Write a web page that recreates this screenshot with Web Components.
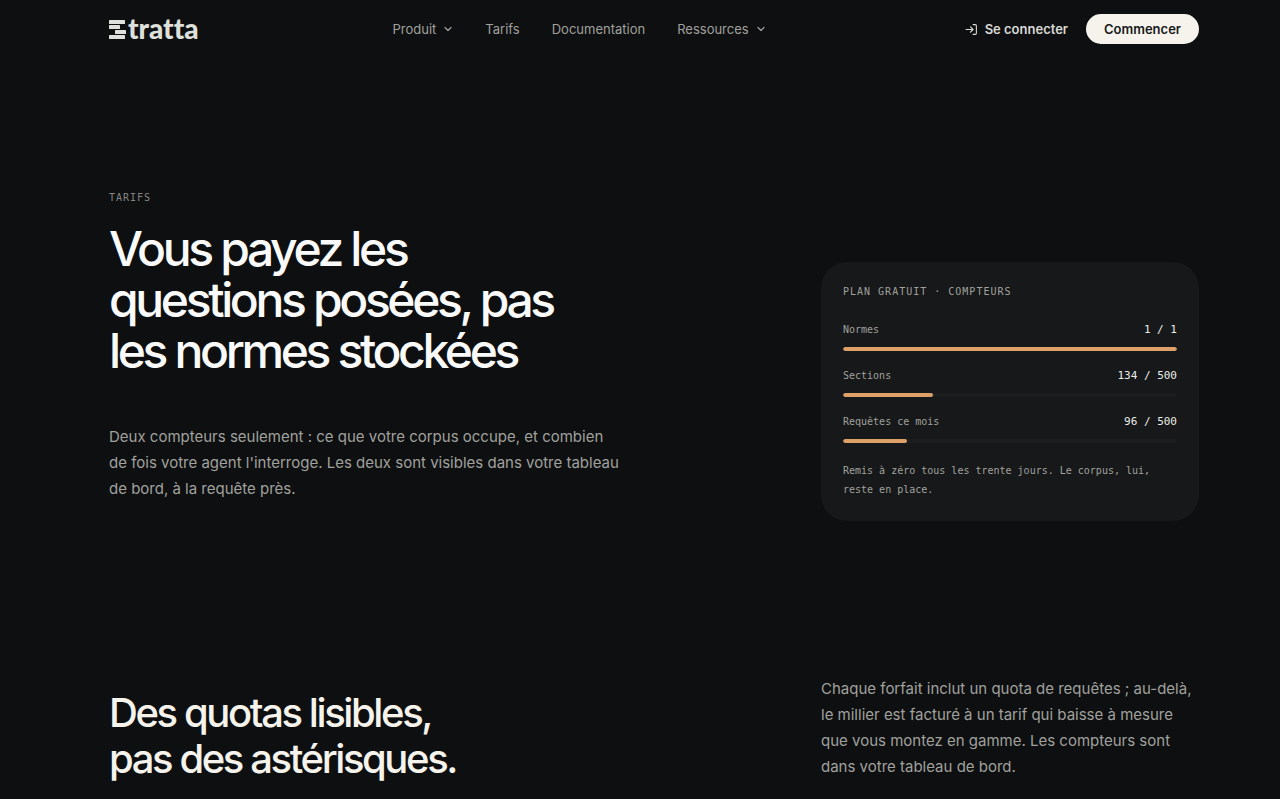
<!DOCTYPE html>
<html lang="fr">
<head>
<meta charset="utf-8">
<meta name="viewport" content="width=device-width, initial-scale=1">
<title>Etratta – Tarifs</title>
<style>
  body {
    --text: #fafafa;
    --cream: #f6f3ec;
    --muted: #a1a19e;
    --accent: #dea069;
    --mono: "DejaVu Sans Mono", monospace;
    --page-start: 109px;
    --page-end: 81px;
    --aside: 378px;
    margin: 0;
    background: #0d0f10;
    color: var(--text);
    font-family: Inter, sans-serif;
    font-size: 15px;
    line-height: 26px;
  }
</style>
</head>
<body>
<site-header></site-header>
<main>
  <pricing-hero>
    <span slot="eyebrow">Tarifs</span>
    <span slot="title">Vous payez les questions posées, pas les normes stockées</span>
    <span slot="lead">Deux compteurs seulement : ce que votre corpus occupe, et combien de fois votre agent l'interroge. Les deux sont visibles dans votre tableau de bord, à la requête près.</span>
    <plan-card slot="aside">
      <span slot="title">Plan gratuit · compteurs</span>
      <usage-meter label="Normes" value="1" max="1"></usage-meter>
      <usage-meter label="Sections" value="134" max="500"></usage-meter>
      <usage-meter label="Requêtes ce mois" value="96" max="500"></usage-meter>
      <span slot="note">Remis à zéro tous les trente jours. Le corpus, lui, reste en place.</span>
    </plan-card>
  </pricing-hero>
  <quota-intro>
    <span slot="title">Des quotas lisibles, pas des astérisques.</span>
    <span slot="text">Chaque forfait inclut un quota de requêtes ; au-delà, le millier est facturé à un tarif qui baisse à mesure que vous montez en gamme. Les compteurs sont dans votre tableau de bord.</span>
  </quota-intro>
</main>

<script>
const define = (name, html, setup) => {
  const template = document.createElement('template');
  template.innerHTML = html;
  customElements.define(name, class extends HTMLElement {
    constructor() {
      super();
      this.attachShadow({ mode: 'open' }).append(template.content.cloneNode(true));
    }
    connectedCallback() { if (setup) setup(this, this.shadowRoot); }
  });
};

define('brand-logo', `
  <style>
    :host { display: block; margin-right: 5px; }
    a { display: flex; align-items: baseline; gap: 2px; padding-bottom: 2px; color: #dfe0dc; text-decoration: none;
        font-family: Lato, sans-serif; font-size: 28px; font-weight: 900; font-variant-ligatures: none; line-height: 30px; }
    svg { display: block; }
  </style>
  <a href="#" aria-label="Etratta">
    <svg width="17" height="19" viewBox="0 0 17 19" fill="currentColor" aria-hidden="true">
      <rect x="0" y="0" width="16" height="4" rx=".6"/>
      <rect x="0" y="5" width="11" height="4" rx=".6"/>
      <rect x="6" y="10" width="11" height="4" rx=".6"/>
      <rect x="0" y="15" width="16" height="4" rx=".6"/>
    </svg>
    <span>tratta</span>
  </a>`);

define('nav-menu', `
  <style>
    :host { display: block; }
    button { display: flex; align-items: center; gap: 7px; padding: 0; border: 0; background: none;
             color: var(--muted); font: inherit; cursor: pointer; }
    svg { display: block; }
  </style>
  <button type="button" aria-haspopup="true" aria-expanded="false">
    <slot></slot>
    <svg width="10" height="12" viewBox="0 0 10 12" fill="none" stroke="currentColor" stroke-width="1.2" stroke-linecap="round" stroke-linejoin="round" aria-hidden="true"><path d="M2 4.5 5 7.5 8 4.5"/></svg>
  </button>`);

define('site-header', `
  <style>
    :host { display: block; padding: 14px var(--page-end) 14px var(--page-start); font-size: 13px; line-height: 18px; }
    header, nav, .actions { display: flex; align-items: center; }
    header { justify-content: space-between; height: 30px; }
    nav { gap: 32px; font-weight: 400; }
    nav a { color: var(--muted); text-decoration: none; }
    .actions { gap: 8px; }
    .login { display: flex; align-items: center; gap: 7px; padding: 0 10px; color: #d9d9d6; font-weight: 600; text-decoration: none; }
    .start { padding: 6px 18px; border: 0; border-radius: 15px; background: var(--cream); color: #17191a;
             font: inherit; font-weight: 600; cursor: pointer; }
    svg { display: block; }
  </style>
  <header>
    <brand-logo></brand-logo>
    <nav aria-label="Navigation principale">
      <nav-menu>Produit</nav-menu>
      <a href="#tarifs">Tarifs</a>
      <a href="#documentation">Documentation</a>
      <nav-menu>Ressources</nav-menu>
    </nav>
    <div class="actions">
      <a class="login" href="#connexion">
        <svg width="13" height="13" viewBox="0 0 24 24" fill="none" stroke="currentColor" stroke-width="2" stroke-linecap="round" stroke-linejoin="round" aria-hidden="true"><path d="M2 12h13M10 7l5 5-5 5M15 3h4a2 2 0 0 1 2 2v14a2 2 0 0 1-2 2h-4"/></svg>
        Se connecter
      </a>
      <button class="start" type="button">Commencer</button>
    </div>
  </header>`);

define('pricing-hero', `
  <style>
    :host { display: grid; grid-template-columns: minmax(0, 1fr) var(--aside); align-items: end; column-gap: 64px;
            padding: 132px var(--page-end) 155px var(--page-start); }
    .copy { padding-bottom: 19px; }
    p, h1 { margin: 0; }
    .eyebrow { color: #858683; font: 10px/16px var(--mono); letter-spacing: 1px; text-transform: uppercase; }
    h1 { max-width: 470px; margin: 17px 0 48px; font-size: 48px; line-height: 51px; font-weight: 500; letter-spacing: -0.07em; }
    .lead { max-width: 513px; color: var(--muted); }
  </style>
  <div class="copy">
    <p class="eyebrow"><slot name="eyebrow"></slot></p>
    <h1><slot name="title"></slot></h1>
    <p class="lead"><slot name="lead"></slot></p>
  </div>
  <slot name="aside"></slot>`);

define('plan-card', `
  <style>
    :host { display: block; padding: 22px; border-radius: 26px; background: #161819; color: var(--muted);
            font: 10px/16px var(--mono); }
    h2, p { margin: 0; font: inherit; }
    h2 { letter-spacing: 1px; text-transform: uppercase; }
    .meters { display: grid; gap: 16px; margin: 21px 0 18px; }
    p { line-height: 19px; }
  </style>
  <h2><slot name="title"></slot></h2>
  <div class="meters"><slot></slot></div>
  <p><slot name="note"></slot></p>`);

define('usage-meter', `
  <style>
    :host { display: grid; gap: 8px; line-height: 18px; }
    .row { display: flex; justify-content: space-between; }
    .value { color: #ecece8; font-size: 11px; }
    .track { height: 4px; border-radius: 2px; background: #1b1d1e; overflow: hidden; }
    .fill { height: 100%; border-radius: 2px; background: var(--accent); }
  </style>
  <div class="row"><span class="label" id="label"></span><span class="value"></span></div>
  <div class="track" role="meter" aria-labelledby="label" aria-valuemin="0"><div class="fill"></div></div>`,
  (host, root) => {
    const value = Number(host.getAttribute('value'));
    const max = Number(host.getAttribute('max'));
    root.querySelector('.label').textContent = host.getAttribute('label');
    root.querySelector('.value').textContent = value + ' / ' + max;
    const track = root.querySelector('.track');
    track.setAttribute('aria-valuenow', value);
    track.setAttribute('aria-valuemax', max);
    root.querySelector('.fill').style.width = (value / max * 100) + '%';
  });

define('quota-intro', `
  <style>
    :host { display: grid; grid-template-columns: minmax(0, 1fr) var(--aside); align-items: start; column-gap: 64px;
            padding: 0 var(--page-end) 16px var(--page-start); }
    h2, p { margin: 0; }
    h2 { max-width: 370px; padding-top: 14px; color: var(--cream); font-size: 40px; line-height: 46px; font-weight: 500; letter-spacing: -0.06em; }
    p { color: var(--muted); }
  </style>
  <h2><slot name="title"></slot></h2>
  <p><slot name="text"></slot></p>`);
</script>
</body>
</html>
